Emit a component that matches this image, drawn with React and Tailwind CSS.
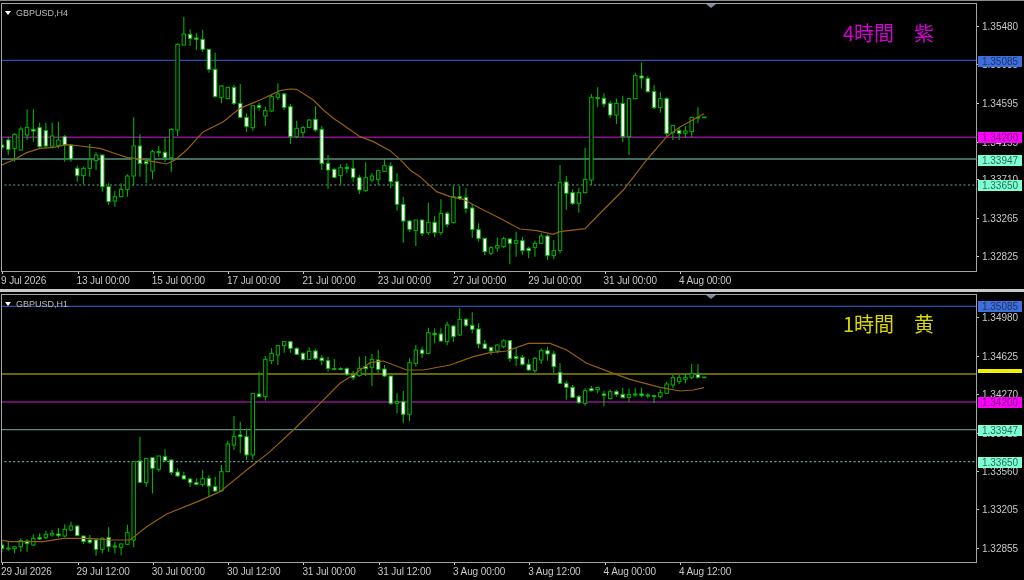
import React from "react";

// candles are [wickTop, bodyTop, bodyBottom, wickBottom, bull] read off the chart at 3x
const h4Candles = [
  [415,435,442,450,0],[410,420,448,465,0],[400,403,446,485,1],[380,387,450,450,1],[328,382,405,420,1],
  [328,388,393,425,0],[368,383,440,445,0],[368,392,438,445,0],[368,408,438,445,1],[365,420,436,445,1],
  [405,410,435,485,0],[432,435,477,485,0],[497,505,527,545,0],[500,505,527,552,1],[432,478,505,530,1],
  [457,465,482,510,1],[465,465,560,575,0],[550,560,605,615,0],[572,590,603,620,1],[550,568,590,592,1],
  [523,528,568,590,1],[352,438,528,555,1],[403,438,490,530,0],[478,485,491,550,0],[450,455,513,538,1],
  [438,455,458,470,0],[412,457,473,485,0],[385,388,473,515,1],[130,133,390,408,1],[50,102,135,135,1],
  [88,103,115,138,0],[100,114,118,150,0],[90,118,148,155,0],[148,148,208,218,0],[158,208,290,292,0],
  [255,258,292,310,1],[260,262,296,298,1],[255,262,310,315,0],[252,310,352,355,0],[340,352,380,396,0],
  [315,317,383,392,1],[308,317,322,332,0],[320,332,348,378,1],[282,290,333,335,1],[250,282,292,300,1],
  [278,282,322,330,0],[312,320,410,432,0],[362,385,410,415,1],[378,383,398,412,1],[358,360,382,385,1],
  [318,358,390,395,0],[378,388,490,510,0],[465,490,510,567,0],[505,508,532,535,0],[493,503,527,555,1],
  [490,502,506,520,0],[478,505,532,545,0],[525,533,570,582,0],[487,533,572,575,1],[520,528,540,547,1],
  [510,512,538,555,1],[478,497,514,515,1],[487,498,545,565,0],[520,545,613,632,0],[590,613,663,728,0],
  [660,663,688,695,0],[660,660,692,738,1],[660,660,700,708,0],[608,667,698,705,1],[648,667,698,712,0],
  [598,640,698,705,1],[635,640,673,682,0],[558,590,668,670,1],[558,590,595,600,0],[565,592,625,640,0],
  [612,624,689,713,0],[670,689,715,725,0],[714,715,755,765,0],[738,743,760,765,1],[712,737,744,755,1],
  [710,716,740,745,1],[716,717,730,793,0],[695,722,730,770,1],[710,722,752,765,0],[740,745,752,775,0],
  [722,730,742,770,1],[700,708,730,732,1],[703,708,767,780,0],[720,752,767,778,1],[495,548,752,760,1],
  [527,546,580,630,0],[568,578,610,615,0],[563,578,610,638,1],[443,538,578,580,1],[282,292,540,555,1],
  [262,293,296,322,0],[280,295,312,322,0],[302,310,345,355,0],[296,310,345,372,1],[287,310,410,426,0],
  [293,296,410,465,1],[218,226,296,296,1],[187,228,234,266,0],[228,235,275,278,0],[255,275,323,327,0],
  [277,296,323,338,1],[292,296,400,408,0],[375,376,398,420,1],[380,392,400,420,0],[378,393,400,412,1],
  [352,352,395,412,1],[322,352,353,370,1],[351,351,353,353,1],
];

const h1Candles = [
  [755,765,775,785,0],[755,775,777,782,1],[768,770,776,790,1],[745,752,770,785,1],[748,753,761,785,0],
  [733,745,765,768,1],[730,743,747,750,0],[722,733,743,747,1],[720,730,735,740,1],[714,732,737,742,0],
  [703,718,738,742,1],[695,708,720,724,1],[707,708,737,738,0],[737,738,755,762,0],[735,750,757,762,0],
  [745,750,778,797,0],[742,745,778,790,1],[712,743,770,785,0],[755,768,771,790,0],[760,762,772,795,1],
  [704,728,763,765,1],[515,515,750,772,1],[440,513,577,578,0],[505,505,578,590,1],[503,503,535,610,0],
  [497,498,538,545,1],[478,500,512,515,0],[508,510,547,555,0],[535,546,558,560,0],[545,557,567,568,0],
  [565,567,578,590,0],[565,578,583,585,0],[540,566,583,590,1],[555,565,588,620,0],[560,590,603,605,0],
  [525,545,602,605,1],[452,462,545,546,1],[378,440,465,480,1],[395,435,440,490,0],[415,440,495,510,0],
  [310,310,495,508,1],[247,312,320,322,0],[198,208,320,332,1],[175,190,212,222,1],[165,167,195,225,1],
  [155,155,167,188,1],[152,155,175,188,0],[172,175,193,195,0],[187,190,208,212,0],[172,184,208,210,1],
  [178,183,205,210,0],[195,204,212,225,0],[200,212,235,245,0],[207,236,238,240,0],[232,236,238,240,0],
  [232,236,253,258,0],[243,253,263,270,0],[200,235,257,260,1],[198,230,236,258,0],[192,208,232,288,1],
  [180,210,238,248,0],[225,237,258,262,0],[258,258,340,345,0],[310,335,340,370,1],[303,335,373,400,0],
  [205,218,373,393,1],[165,180,220,230,1],[170,180,190,205,0],[113,128,190,192,1],[115,130,134,160,0],
  [115,132,153,155,0],[95,105,155,165,1],[105,108,140,155,0],[55,88,135,137,1],[85,88,106,112,0],
  [67,106,118,130,0],[100,117,162,175,0],[150,162,175,178,0],[170,172,183,195,0],[163,165,183,190,1],
  [148,152,170,175,1],[150,152,205,215,0],[172,200,205,228,0],[195,202,223,227,0],[208,223,240,243,0],
  [200,205,242,248,1],[175,182,210,222,1],[170,182,192,212,0],[182,192,230,248,0],[220,247,280,282,0],
  [272,280,292,330,0],[285,292,322,322,0],[315,320,338,342,0],[295,302,340,347,1],[288,296,302,305,0],
  [290,292,299,310,1],[302,312,316,348,0],[298,305,326,328,1],[300,305,313,320,0],[293,313,323,325,0],
  [296,314,322,336,1],[295,312,315,320,0],[293,312,316,322,0],[310,315,318,325,0],[315,317,319,340,0],
  [298,308,320,325,1],[275,282,310,312,1],[255,263,285,295,1],[255,263,275,282,1],[250,262,268,280,1],
  [222,250,263,268,1],[223,253,263,265,0],[261,261,263,263,0],
];

const h4Ma = [
  [0,497],[40,480],[80,458],[120,445],[160,442],[200,434],[240,438],[300,445],[350,462],[380,472],[420,477],
  [460,485],[500,492],[525,480],[560,450],[610,395],[670,365],[720,325],[780,300],[840,272],[870,267],[890,268],
  [940,300],[970,330],[1000,355],[1020,368],[1080,410],[1120,425],[1170,452],[1200,478],[1230,510],[1260,530],
  [1310,575],[1350,590],[1390,598],[1440,625],[1500,655],[1560,687],[1610,692],[1660,703],[1680,695],[1755,686],
  [1810,630],[1870,570],[1940,480],[2000,410],[2040,381],[2112,341],
];

const h1Ma = [
  [0,750],[30,755],[130,755],[190,745],[270,745],[330,750],[390,750],[440,710],[500,672],[600,632],[660,605],
  [740,540],[810,485],[880,420],[960,340],[1020,280],[1060,255],[1110,218],[1150,213],[1220,240],[1270,240],
  [1350,225],[1420,200],[1470,188],[1520,183],[1585,160],[1650,160],[1700,180],[1760,220],[1840,250],[1890,268],
  [1980,292],[2040,303],[2080,300],[2112,293],
];

const h4 = {
  symbol: "GBPUSD,H4",
  title: "4時間　紫",
  titleClass: "text-[#d400d4]",
  top: 3,
  base: 0,
  candles: h4Candles,
  ma: h4Ma,
  lines: [
    { y: 60.4, color: "#2a50b0", width: 1.2 },
    { y: 137.2, color: "#8c1090", width: 1.4 },
    { y: 159, color: "#55907c", width: 1.5 },
    { y: 185, color: "#5ab09a", width: 1.2, dash: "2 2.4" },
  ],
  prices: [
    ["1.35480", 26],
    ["1.35035", 64],
    ["1.34595", 103],
    ["1.34155", 142],
    ["1.33710", 179],
    ["1.33265", 218],
    ["1.32825", 256],
  ],
  tags: [
    ["1.35085", 61, "bg-[#3f6fdc] text-[#1c3468]"],
    ["1.34200", 137.7, "bg-[#ff00ff] text-[#701070]"],
    ["1.33947", 160, "bg-[#7fffd4] text-[#2a6a58]"],
    ["1.33650", 185.5, "bg-[#7fffd4] text-[#2a6a58]"],
  ],
  times: ["9 Jul 2026", "13 Jul 00:00", "15 Jul 00:00", "17 Jul 00:00", "21 Jul 00:00", "23 Jul 00:00", "27 Jul 00:00", "29 Jul 00:00", "31 Jul 00:00", "4 Aug 00:00"],
};

const h1 = {
  symbol: "GBPUSD,H1",
  title: "1時間　黄",
  titleClass: "text-[#d8d800]",
  top: 294,
  base: 290,
  candles: h1Candles,
  ma: h1Ma,
  lines: [
    { y: 306.4, color: "#2a50b0", width: 1.2 },
    { y: 374, color: "#8a8a00", width: 1.7 },
    { y: 402, color: "#8c1090", width: 1.4 },
    { y: 429.7, color: "#55907c", width: 1.2 },
    { y: 461.7, color: "#5ab09a", width: 1.2, dash: "2 2.4" },
  ],
  prices: [
    ["1.34980", 317.5],
    ["1.34625", 356],
    ["1.34270", 394],
    ["1.33915", 433],
    ["1.33560", 471],
    ["1.33205", 509.6],
    ["1.32855", 548],
  ],
  tags: [
    ["1.35085", 306.7, "bg-[#3f6fdc] text-[#1c3468]"],
    ["1.34200", 402.7, "bg-[#ff00ff] text-[#701070]"],
    ["1.33947", 430, "bg-[#7fffd4] text-[#2a6a58]"],
    ["1.33650", 462.3, "bg-[#7fffd4] text-[#2a6a58]"],
  ],
  strip: 370.7,
  times: ["29 Jul 2026", "29 Jul 12:00", "30 Jul 00:00", "30 Jul 12:00", "31 Jul 00:00", "31 Jul 12:00", "3 Aug 00:00", "3 Aug 12:00", "4 Aug 00:00", "4 Aug 12:00"],
};

const ChartPane = ({ chart }) => {
  const toY = (z) => chart.base + z / 3;

  return (
    <div className="grid h-[286px] grid-cols-[977px_47px] grid-rows-[269px_17px]">
      <div className="relative ml-px h-[269px] border border-[#a4a4a4]">
        <svg
          className="block h-full w-full"
          viewBox={`2 ${chart.top + 1} 974 267`}
          preserveAspectRatio="none"
        >
          {chart.lines.map((line) => (
            <line
              key={line.y}
              x1="0"
              x2="976"
              y1={line.y}
              y2={line.y}
              stroke={line.color}
              strokeWidth={line.width}
              strokeDasharray={line.dash}
            />
          ))}

          {chart.candles.map((c, i) => {
            const x = 2 + i * 6.27;
            const top = toY(c[1]);
            const height = Math.max(toY(c[2]) - top, 0.7);
            return (
              <g key={i}>
                <line x1={x} x2={x} y1={toY(c[0])} y2={toY(c[3])} stroke="#00b400" strokeWidth="1.1" />
                <rect
                  x={x - 1.7}
                  y={top}
                  width="3.4"
                  height={height}
                  fill={c[4] ? "#000" : "#fff"}
                  stroke="#00b400"
                  strokeWidth="1"
                />
              </g>
            );
          })}

          <polyline
            points={chart.ma.map((p) => `${p[0] / 3},${toY(p[1])}`).join(" ")}
            fill="none"
            stroke="#96600e"
            strokeWidth="1.2"
          />

          <path d={`M706 ${chart.top + 1}h10l-5 4z`} fill="#7d8c9c" />
        </svg>

        <div className="absolute left-[3px] top-[3px] flex items-center gap-[5px] text-[9px] leading-[12px] text-[#bcbcbc]">
          <span className="h-0 w-0 border-x-[3.5px] border-t-[4px] border-x-transparent border-t-white" />
          <span>{chart.symbol}</span>
        </div>

        <div className={`absolute left-[841px] top-[14px] whitespace-nowrap font-['Noto_Sans_CJK_JP','Liberation_Sans',sans-serif] text-[20px] leading-[30px] ${chart.titleClass}`}>
          {chart.title}
        </div>
      </div>

      <div className="relative text-[10px] leading-[11px] text-[#c8c8c8]">
        {chart.prices.map(([label, y]) => (
          <div
            key={label}
            className="absolute left-0 flex items-center"
            style={{ top: y - chart.top - 5.5 }}
          >
            <span className="h-px w-[2px] bg-[#c8c8c8]" />
            <span className="ml-[3px]">{label}</span>
          </div>
        ))}
        {chart.strip && (
          <div
            className="absolute left-px h-[4px] w-[44px] bg-[#f0f000]"
            style={{ top: chart.strip - chart.top - 2 }}
          />
        )}
        {chart.tags.map(([label, y, colors]) => (
          <div
            key={label}
            className={`absolute left-px h-[11px] w-[44px] text-center ${colors}`}
            style={{ top: y - chart.top - 5.5 }}
          >
            {label}
          </div>
        ))}
      </div>

      <div className="col-span-2 flex pl-px text-[10px] leading-[13px] text-[#c8c8c8]">
        {chart.times.map((label, i) => (
          <div
            key={label}
            className={`tracking-[-0.1px] ${i === 0 ? "w-[75.5px]" : "w-[75.3px]"}`}
          >
            <span className="ml-px block h-[2px] w-px bg-[#c8c8c8]" />
            {label}
          </div>
        ))}
      </div>
    </div>
  );
};

const App = () => {
  return (
    <div className="flex h-[580px] w-[1024px] flex-col overflow-hidden bg-black blur-[0.3px] font-['Liberation_Sans',sans-serif]">
      <div className="h-[1px] shrink-0 bg-[#8a8a8a]" />
      <div className="h-[2px] shrink-0" />
      <ChartPane chart={h4} />
      <div className="h-[3px] shrink-0 bg-[#c8c8c8]" />
      <div className="h-[2px] shrink-0" />
      <ChartPane chart={h1} />
    </div>
  );
};

export default App;
